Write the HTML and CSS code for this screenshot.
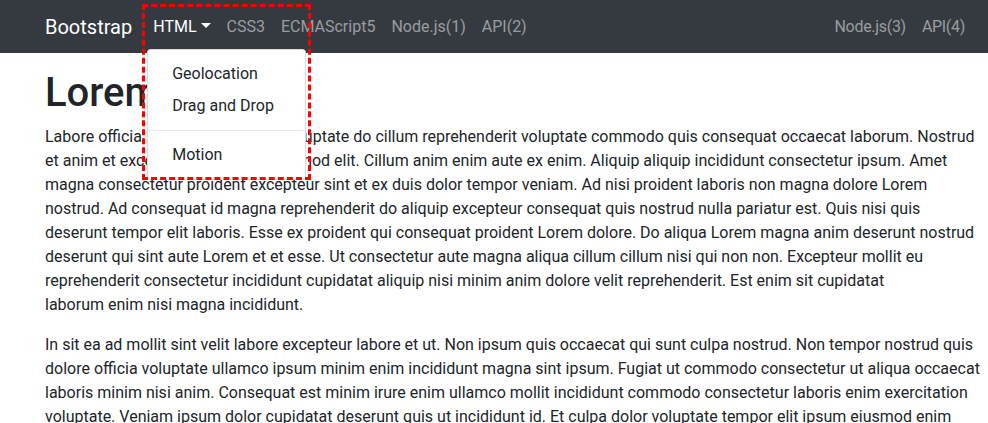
FILE: index.html
```html
<!DOCTYPE html>
<html lang="en">
<head>
<meta charset="utf-8">
<title>Bootstrap</title>
<link rel="stylesheet" href="styles.css">
</head>
<body>
<nav class="navbar">
  <a class="brand" href="#">Bootstrap</a>
  <ul class="nav">
    <li class="nav-item dropdown">
      <a class="nav-link active caret" href="#">HTML</a>
      <div class="dropdown-menu">
        <a class="dropdown-item" href="#">Geolocation</a>
        <a class="dropdown-item" href="#">Drag and Drop</a>
        <div class="dropdown-divider"></div>
        <a class="dropdown-item" href="#">Motion</a>
      </div>
      <div class="highlight"></div>
    </li>
    <li class="nav-item"><a class="nav-link" href="#">CSS3</a></li>
    <li class="nav-item"><a class="nav-link" href="#">ECMAScript5</a></li>
    <li class="nav-item"><a class="nav-link" href="#">Node.js(1)</a></li>
    <li class="nav-item"><a class="nav-link" href="#">API(2)</a></li>
  </ul>
  <ul class="nav nav-right">
    <li class="nav-item"><a class="nav-link" href="#">Node.js(3)</a></li>
    <li class="nav-item"><a class="nav-link" href="#">API(4)</a></li>
  </ul>
</nav>
<main class="content">
  <h1 class="title">Lorem</h1>
  <p class="text">Labore officia proident sunt ad et voluptate do cillum reprehenderit voluptate commodo quis consequat occaecat laborum. Nostrud<br>et anim et excepteur aute anim eiusmod elit. Cillum anim enim aute ex enim. Aliquip aliquip incididunt consectetur ipsum. Amet<br>magna consectetur proident excepteur sint et ex duis dolor tempor veniam. Ad nisi proident laboris non magna dolore Lorem<br>nostrud. Ad consequat id magna reprehenderit do aliquip excepteur consequat quis nostrud nulla pariatur est. Quis nisi quis<br>deserunt tempor elit laboris. Esse ex proident qui consequat proident Lorem dolore. Do aliqua Lorem magna anim deserunt nostrud<br>deserunt qui sint aute Lorem et et esse. Ut consectetur aute magna aliqua cillum cillum nisi qui non non. Excepteur mollit eu<br>reprehenderit consectetur incididunt cupidatat aliquip nisi minim anim dolore velit reprehenderit. Est enim sit cupidatat<br>laborum enim nisi magna incididunt.</p>
  <p class="text">In sit ea ad mollit sint velit labore excepteur labore et ut. Non ipsum quis occaecat qui sunt culpa nostrud. Non tempor nostrud quis<br>dolore officia voluptate ullamco ipsum minim enim incididunt magna sint ipsum. Fugiat ut commodo consectetur ut aliqua occaecat<br>laboris minim nisi anim. Consequat est minim irure enim ullamco mollit incididunt commodo consectetur laboris enim exercitation<br>voluptate. Veniam ipsum dolor cupidatat deserunt quis ut incididunt id. Et culpa dolor voluptate tempor elit ipsum eiusmod enim</p>
</main>
</body>
</html>
```
FILE: styles.css
```css
* { box-sizing: border-box; }

html, body {
  margin: 0;
  padding: 0;
  overflow-x: hidden;
}

body {
  font-family: Roboto, "Liberation Sans", sans-serif;
  font-size: 16px;
  line-height: 24px;
  color: #212529;
  background: #fff;
}

a { text-decoration: none; }

.navbar {
  display: flex;
  align-items: center;
  height: 53px;
  padding: 0 15px 0 45px;
  background: #343a40;
}

.brand {
  font-size: 20px;
  line-height: 30px;
  color: #fff;
  margin-right: 13px;
}

.nav {
  display: flex;
  list-style: none;
  margin: 0;
  padding: 0;
}

.nav-right { margin-left: auto; }

.nav-item { position: relative; }

.nav-link {
  display: block;
  padding: 8px;
  color: rgba(255, 255, 255, 0.5);
}

.nav-link.active { color: #fff; }

.nav-right .nav-link { letter-spacing: -0.3px; }

.caret::after {
  content: "";
  display: inline-block;
  margin-left: 4px;
  vertical-align: 4px;
  border-top: 5px solid;
  border-left: 5px solid transparent;
  border-right: 5px solid transparent;
}

.dropdown-menu {
  position: absolute;
  top: 100%;
  left: 2px;
  z-index: 10;
  width: 159px;
  margin-top: 2px;
  padding: 8px 0;
  background: #fff;
  border: 1px solid rgba(0, 0, 0, 0.15);
  border-radius: 4px;
}

.dropdown-item {
  display: block;
  padding: 4px 24px;
  color: #212529;
  white-space: nowrap;
}

.dropdown-divider {
  height: 0;
  margin: 8px 0;
  border-top: 1px solid #e9ecef;
}

.highlight {
  position: absolute;
  top: -3px;
  left: -3px;
  width: 169px;
  height: 176px;
  border: 3px dashed #ff0000;
  z-index: 11;
  pointer-events: none;
}

.content {
  padding: 0 15px 0 45px;
  margin-top: 16px;
}

.title {
  margin: 0 0 8px;
  font-size: 40px;
  line-height: 48px;
  font-weight: 500;
}

.text {
  margin: 0 0 16px;
  white-space: nowrap;
}
```
